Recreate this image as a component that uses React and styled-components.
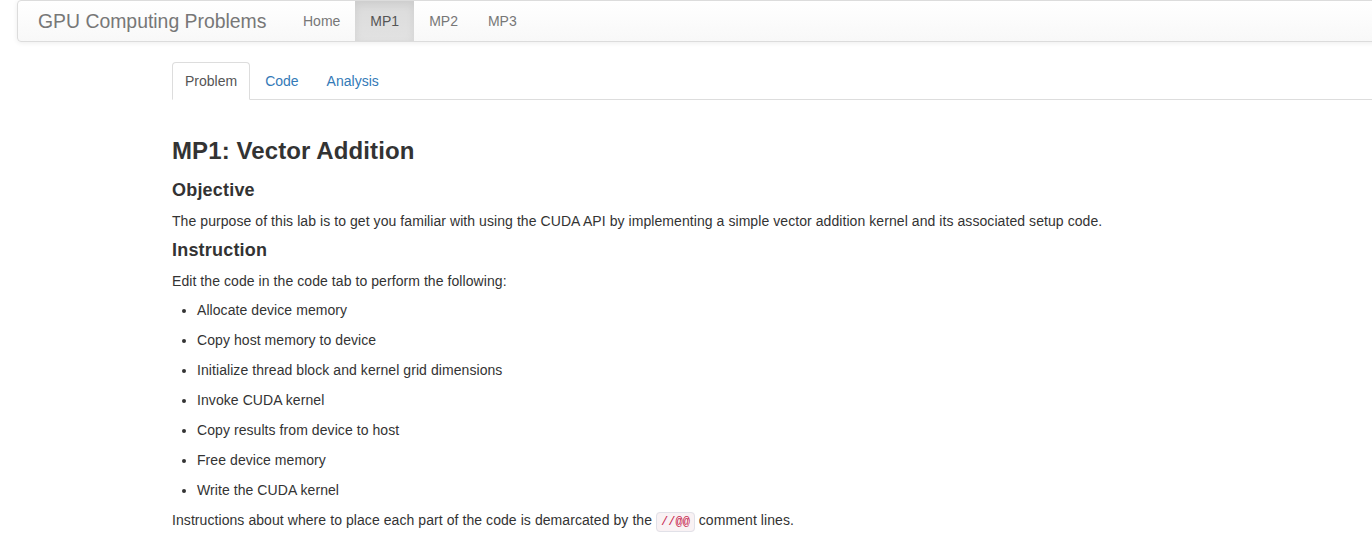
import React from "react"
import styled, { createGlobalStyle } from "styled-components"

const GlobalStyle = createGlobalStyle`
  html, body {
    margin: 0;
    padding: 0;
    background: #fff;
    overflow: hidden;
  }
  body {
    font-family: "Liberation Sans", Arial, sans-serif;
    font-size: 14px;
    line-height: 20px;
    color: #333;
  }
`

const navItems = ["Home", "MP1", "MP2", "MP3"]
const tabs = ["Problem", "Code", "Analysis"]
const steps = [
  "Allocate device memory",
  "Copy host memory to device",
  "Initialize thread block and kernel grid dimensions",
  "Invoke CUDA kernel",
  "Copy results from device to host",
  "Free device memory",
  "Write the CUDA kernel",
]

const App = () => {
  return (
    <Page>
      <GlobalStyle />
      <Navbar>
        <Brand>GPU Computing Problems</Brand>
        <NavList>
          {navItems.map(item => (
            <NavItem key={item} active={item === "MP1"}>
              {item}
            </NavItem>
          ))}
        </NavList>
      </Navbar>

      <Main>
        <Tabs>
          {tabs.map(tab => (
            <Tab key={tab} active={tab === "Problem"}>
              {tab}
            </Tab>
          ))}
        </Tabs>

        <Title>MP1: Vector Addition</Title>
        <SubTitle>Objective</SubTitle>
        <Text>
          The purpose of this lab is to get you familiar with using the CUDA API by
          implementing a simple vector addition kernel and its associated setup code.
        </Text>
        <SubTitle>Instruction</SubTitle>
        <Text>Edit the code in the code tab to perform the following:</Text>
        <Steps>
          {steps.map(step => (
            <Step key={step}>{step}</Step>
          ))}
        </Steps>
        <Text>
          Instructions about where to place each part of the code is demarcated by the{" "}
          <Code>//@@</Code> comment lines.
        </Text>
      </Main>
    </Page>
  )
}

export default App

const Page = styled.div`
  width: 100%;
`

const Navbar = styled.nav`
  display: flex;
  align-items: stretch;
  height: 40px;
  margin: 0 -20px 0 17px;
  border: 1px solid #dcdcdc;
  border-radius: 4px;
  background: linear-gradient(to bottom, #fff 0, #f8f8f8 100%);
  box-shadow: inset 0 1px 0 rgba(255, 255, 255, 0.15), 0 1px 5px rgba(0, 0, 0, 0.075);
`

const Brand = styled.div`
  padding: 10px 20px;
  width: 230px;
  font-size: 19.4px;
  line-height: 20px;
  color: #777;
  white-space: nowrap;
`

const NavList = styled.div`
  display: flex;
`

const NavItem = styled.div`
  padding: 10px 15px;
  line-height: 20px;
  color: ${props => (props.active ? "#555" : "#777")};
  background: ${props =>
    props.active ? "linear-gradient(to bottom, #dbdbdb 0, #e2e2e2 100%)" : "transparent"};
  box-shadow: ${props => (props.active ? "inset 0 3px 9px rgba(0, 0, 0, 0.075)" : "none")};
`

const Main = styled.main`
  margin: 20px 0 0 172px;
`

const Tabs = styled.div`
  display: flex;
  gap: 2px;
  border-bottom: 1px solid #ddd;
  margin-right: -20px;
`

const Tab = styled.div`
  padding: 8px 12px;
  line-height: 20px;
  margin-bottom: -1px;
  border: 1px solid ${props => (props.active ? "#ddd" : "transparent")};
  border-bottom-color: transparent;
  border-radius: 4px 4px 0 0;
  background: ${props => (props.active ? "#fff" : "transparent")};
  color: ${props => (props.active ? "#555" : "#337ab7")};
`

const Title = styled.h2`
  margin: 38px 0 16px;
  font-size: 24px;
  line-height: 26.4px;
  font-weight: 700;
  letter-spacing: 0.1px;
  color: #333;
`

const SubTitle = styled.h4`
  margin: 0 0 11px;
  font-size: 18px;
  line-height: 20px;
  font-weight: 700;
  letter-spacing: 0.2px;
  color: #333;
`

const Text = styled.p`
  margin: 0 0 9px;
  letter-spacing: 0.07px;
`

const Steps = styled.ul`
  margin: 1px 0 0;
  padding-left: 25px;
  letter-spacing: 0.07px;
`

const Step = styled.li`
  margin-bottom: 10px;
`

const Code = styled.code`
  padding: 2px 4px;
  font-family: "Liberation Mono", "DejaVu Sans Mono", monospace;
  font-size: 12px;
  letter-spacing: 0;
  color: #c7254e;
  background: #f9f2f4;
  border: 1px solid #e1e1e8;
  border-radius: 4px;
`
